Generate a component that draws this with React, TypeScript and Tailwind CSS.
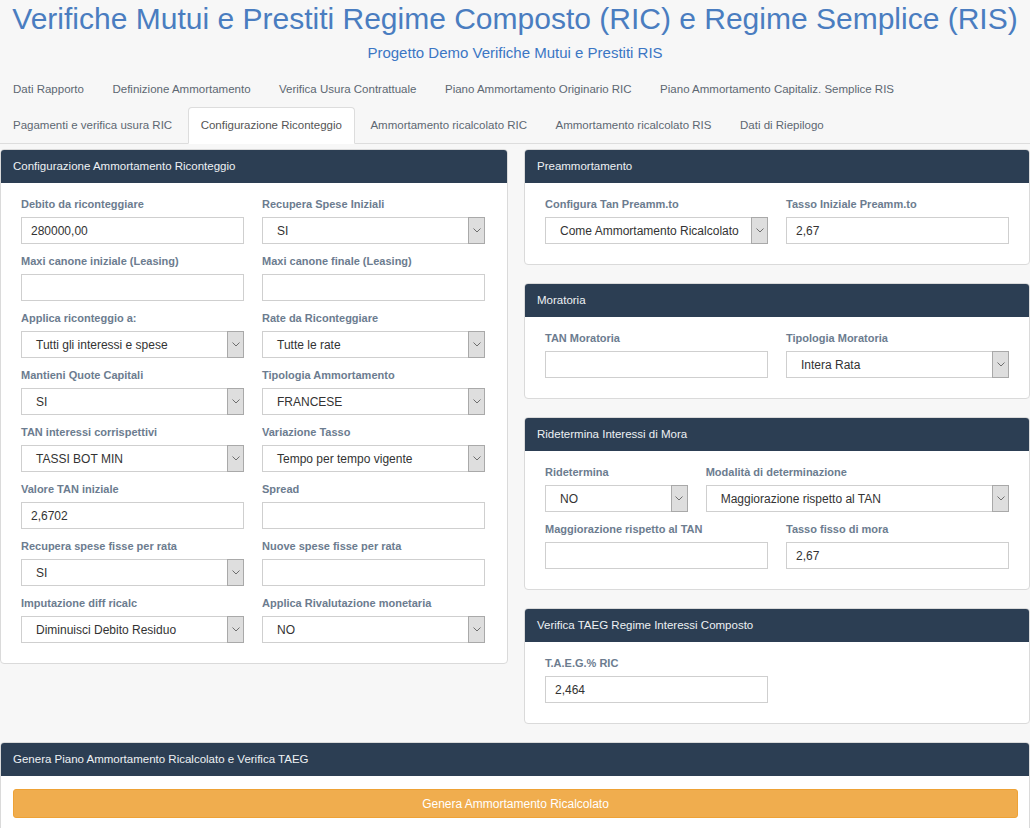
import React from "react";

const FONT = { fontFamily: '"Liberation Sans", Arial, Helvetica, sans-serif' };

type FieldDef = {
  label: string;
  kind: "input" | "select";
  value: string;
  span?: string;
};

const tabsRow = [
  "Dati Rapporto",
  "Definizione Ammortamento",
  "Verifica Usura Contrattuale",
  "Piano Ammortamento Originario RIC",
  "Piano Ammortamento Capitaliz. Semplice RIS",
  "Pagamenti e verifica usura RIC",
  "Configurazione Riconteggio",
  "Ammortamento ricalcolato RIC",
  "Ammortamento ricalcolato RIS",
  "Dati di Riepilogo",
];

const leftFields: FieldDef[] = [
  { label: "Debito da riconteggiare", kind: "input", value: "280000,00" },
  { label: "Recupera Spese Iniziali", kind: "select", value: "SI" },
  { label: "Maxi canone iniziale (Leasing)", kind: "input", value: "" },
  { label: "Maxi canone finale (Leasing)", kind: "input", value: "" },
  { label: "Applica riconteggio a:", kind: "select", value: "Tutti gli interessi e spese" },
  { label: "Rate da Riconteggiare", kind: "select", value: "Tutte le rate" },
  { label: "Mantieni Quote Capitali", kind: "select", value: "SI" },
  { label: "Tipologia Ammortamento", kind: "select", value: "FRANCESE" },
  { label: "TAN interessi corrispettivi", kind: "select", value: "TASSI BOT MIN" },
  { label: "Variazione Tasso", kind: "select", value: "Tempo per tempo vigente" },
  { label: "Valore TAN iniziale", kind: "input", value: "2,6702" },
  { label: "Spread", kind: "input", value: "" },
  { label: "Recupera spese fisse per rata", kind: "select", value: "SI" },
  { label: "Nuove spese fisse per rata", kind: "input", value: "" },
  { label: "Imputazione diff ricalc", kind: "select", value: "Diminuisci Debito Residuo" },
  { label: "Applica Rivalutazione monetaria", kind: "select", value: "NO" },
];

const rightPanels: { title: string; fields: FieldDef[] }[] = [
  {
    title: "Preammortamento",
    fields: [
      { label: "Configura Tan Preamm.to", kind: "select", value: "Come Ammortamento Ricalcolato" },
      { label: "Tasso Iniziale Preamm.to", kind: "input", value: "2,67" },
    ],
  },
  {
    title: "Moratoria",
    fields: [
      { label: "TAN Moratoria", kind: "input", value: "" },
      { label: "Tipologia Moratoria", kind: "select", value: "Intera Rata" },
    ],
  },
  {
    title: "Ridetermina Interessi di Mora",
    fields: [
      { label: "Ridetermina", kind: "select", value: "NO", span: "col-span-2" },
      { label: "Modalità di determinazione", kind: "select", value: "Maggiorazione rispetto al TAN", span: "col-span-4" },
      { label: "Maggiorazione rispetto al TAN", kind: "input", value: "" },
      { label: "Tasso fisso di mora", kind: "input", value: "2,67" },
    ],
  },
  {
    title: "Verifica TAEG Regime Interessi Composto",
    fields: [{ label: "T.A.E.G.% RIC", kind: "input", value: "2,464" }],
  },
];

function Control({ kind, value }: { kind: "input" | "select"; value: string }) {
  if (kind === "input") {
    return (
      <div className="h-[27px] border border-[#cfcfcf] bg-white pl-[9px] flex items-center text-[12px] text-[#333]">
        {value}
      </div>
    );
  }
  return (
    <div className="h-[27px] border border-[#cfcfcf] bg-white flex items-stretch text-[12px] text-[#333]">
      <span className="flex-1 pl-[14px] flex items-center whitespace-nowrap overflow-hidden">{value}</span>
      <span className="-my-px -mr-px w-[17px] border border-[#a9a9a9] bg-[#dedede] flex items-center justify-center">
        <svg width="8" height="5" viewBox="0 0 8 5">
          <polyline points="0.5,0.5 4,4 7.5,0.5" fill="none" stroke="#6e6e6e" strokeWidth="1" />
        </svg>
      </span>
    </div>
  );
}

function Field({ f }: { f: FieldDef }) {
  return (
    <div className={`${f.span ?? "col-span-3"} mb-[9px]`}>
      <div className="text-[11px] font-bold leading-[16px] text-[#6c7c8f] mb-[5px] whitespace-nowrap">{f.label}</div>
      <Control kind={f.kind} value={f.value} />
    </div>
  );
}

function Panel({ title, children, bodyClass }: { title: string; children: React.ReactNode; bodyClass?: string }) {
  return (
    <div className="border border-[#dadada] rounded-[4px] bg-white overflow-hidden">
      <div className="h-[33px] bg-[#2c3e53] px-[12px] flex items-center text-[11.5px] text-[#eef1f4]">{title}</div>
      <div className={bodyClass ?? "px-[20px] pt-[13px] pb-[11px]"}>{children}</div>
    </div>
  );
}

export default function App() {
  return (
    <div className="min-h-screen bg-[#f7f7f7]" style={FONT}>
      <h1 className="pt-[1px] text-center text-[30px] leading-[36px] text-[#4a7dc0] whitespace-nowrap">
        Verifiche Mutui e Prestiti Regime Composto (RIC) e Regime Semplice (RIS)
      </h1>
      <div className="mt-[6px] text-center text-[15px] leading-[20px] text-[#3b76c4]">
        Progetto Demo Verifiche Mutui e Prestiti RIS
      </div>

      <ul className="mt-[8px] flex flex-wrap border-b border-[#dddddd]">
        {tabsRow.map((t) => {
          const active = t === "Configurazione Riconteggio";
          return (
            <li key={t} className="mb-[-1px] mr-[2.5px]">
              <div
                className={`px-[12px] py-[9px] leading-[17px] text-[11.5px] whitespace-nowrap border rounded-t-[4px] ${
                  active
                    ? "bg-white border-[#dddddd] border-b-transparent text-[#555]"
                    : "border-transparent text-[#5d6772]"
                }`}
              >
                {t}
              </div>
            </li>
          );
        })}
      </ul>

      <div className="mt-[5px] grid grid-cols-[508px_1fr] gap-x-[16px] items-start">
        <Panel title="Configurazione Ammortamento Riconteggio" bodyClass="pl-[20px] pr-[22px] pt-[13px] pb-[11px]">
          <div className="grid grid-cols-6 gap-x-[18px]">
            {leftFields.map((f) => (
              <Field key={f.label} f={f} />
            ))}
          </div>
        </Panel>

        <div className="flex flex-col gap-[18px]">
          {rightPanels.map((p) => (
            <Panel key={p.title} title={p.title}>
              <div className="grid grid-cols-6 gap-x-[18px]">
                {p.fields.map((f) => (
                  <Field key={f.label} f={f} />
                ))}
              </div>
            </Panel>
          ))}
        </div>
      </div>

      <div className="mt-[18px]">
        <Panel title="Genera Piano Ammortamento Ricalcolato e Verifica TAEG" bodyClass="pl-[12px] pr-[11px] pt-[13px] pb-[13px]">
          <button className="w-full h-[29px] rounded-[3px] border border-[#eea236] bg-[#f0ad4e] text-white text-[12px]">
            Genera Ammortamento Ricalcolato
          </button>
        </Panel>
      </div>
    </div>
  );
}
